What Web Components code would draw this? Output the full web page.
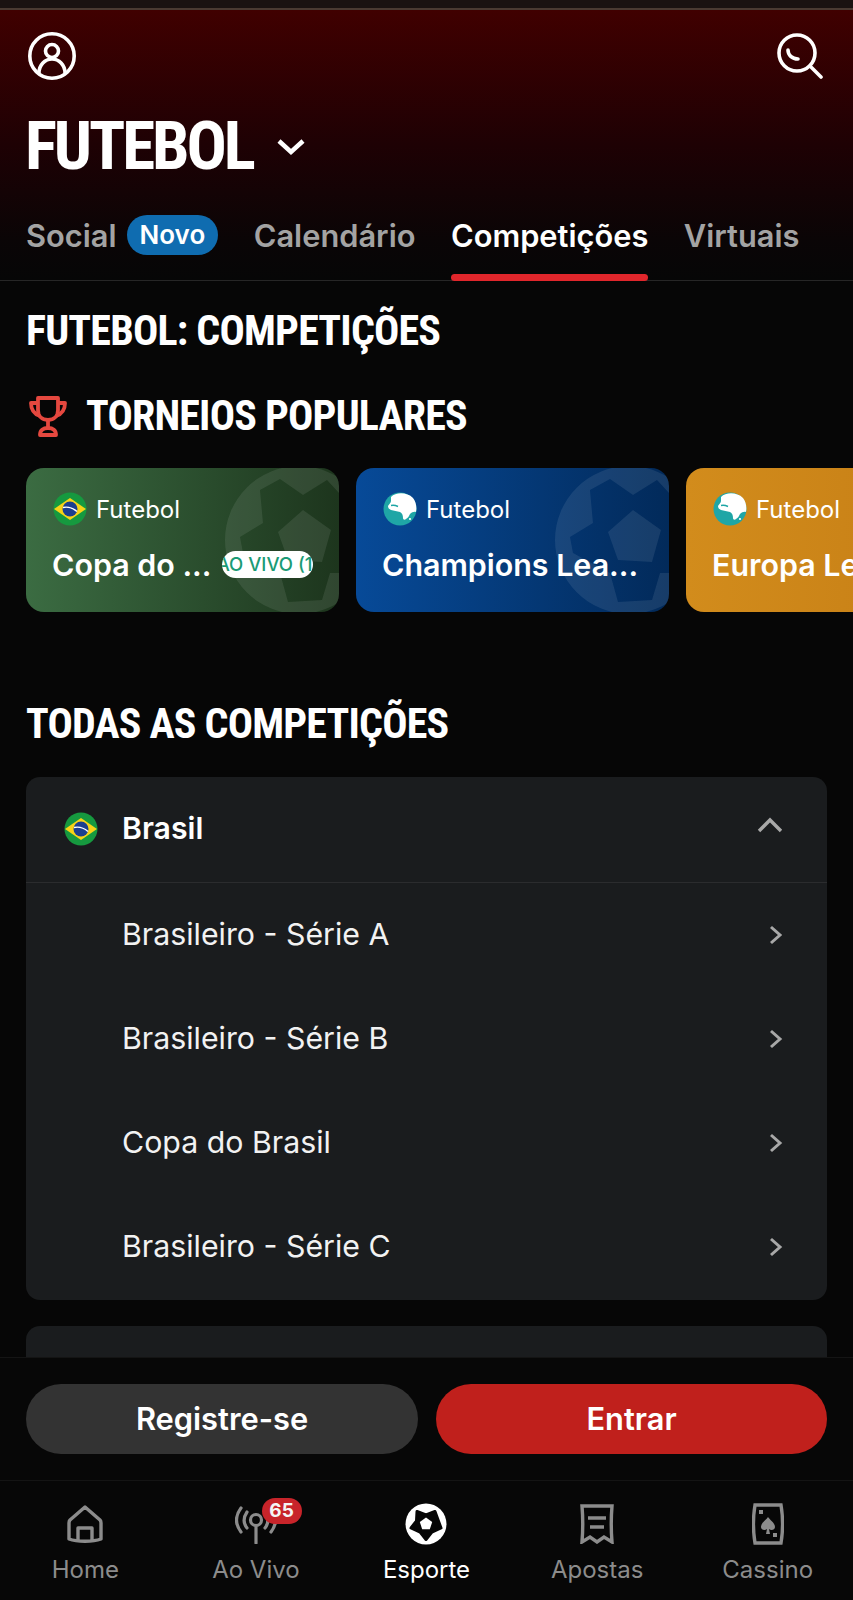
<!DOCTYPE html>
<html lang="pt">
<head>
<meta charset="utf-8">
<title>Futebol</title>
<style>
    html, body { margin: 0; background: #060606; }
    body { font-family: Inter, "Liberation Sans", sans-serif; color: #fff; }
    .cards { display: flex; gap: 17px; }
</style>
</head>
<body>
<sport-app>
    <sport-header slot="header" title="FUTEBOL"></sport-header>
    <section-title>FUTEBOL: COMPETIÇÕES</section-title>
    <section-title trophy>TORNEIOS POPULARES</section-title>
    <div class="cards" slot="cards">
        <tourney-card theme="green" flag="br" name="Copa do ..." live="AO VIVO (1)"></tourney-card>
        <tourney-card theme="blue" flag="world" name="Champions Lea..."></tourney-card>
        <tourney-card theme="orange" flag="world" name="Europa League"></tourney-card>
    </div>
    <section-title slot="all">TODAS AS COMPETIÇÕES</section-title>
    <comp-group slot="all" name="Brasil">
        <comp-row>Brasileiro - Série A</comp-row>
        <comp-row>Brasileiro - Série B</comp-row>
        <comp-row>Copa do Brasil</comp-row>
        <comp-row>Brasileiro - Série C</comp-row>
    </comp-group>
    <comp-group slot="all"></comp-group>
    <action-bar slot="footer"></action-bar>
    <nav-bar slot="footer"></nav-bar>
</sport-app>

<script>
const FLAGS = {
    br: `<svg viewBox="0 0 34 34" width="34" height="34">
        <circle cx="17" cy="17" r="16.5" fill="#16993f"/>
        <path d="M1 17 17 6l16 11-16 11z" fill="#f7d417"/>
        <circle cx="17" cy="17" r="7.5" fill="#1c3f8f"/>
        <path d="M10 15.5c5-1 10 .5 14 4" fill="none" stroke="#fff" stroke-width="1.4"/>
    </svg>`,
    world: `<svg viewBox="0 0 34 34" width="34" height="34">
        <circle cx="17" cy="17" r="16.5" fill="#1fa6a6"/>
        <path d="M8 5C13 0 24 0 30 6c3 4 4 9 3 14-2-.5-4 0-6 2-1 2-2 4-4 5-1 1-3 1-3-1 0-3-1-5-3-6-3-1-6-1-9-2-2-1-3-2-3-4 1-2 3-3 3-5 0-2 0-3 0-4z" fill="#fff"/>
        <path d="M8 13.500c2-.5 5 0 7 1" fill="none" stroke="#1fa6a6" stroke-width="1.400"/>
        <circle cx="27" cy="27" r="1.100" fill="#fff"/>
    </svg>`
};

class SportApp extends HTMLElement {
    constructor() {
        super();
        this.shadow = this.attachShadow({mode: 'open'});
    }
    connectedCallback() {
        this.shadow.innerHTML = `
        <style>
            :host { display: flex; flex-direction: column; width: 853px; height: 1600px; overflow: hidden; background: #060606; }
            .main { flex: 1; min-height: 0; overflow: hidden; display: flex; flex-direction: column; }
            .titles { display: flex; flex-direction: column; padding: 26px 26px 0; gap: 37px; }
            .cards { padding: 28px 0 0 26px; }
            .all { padding: 88px 26px 0; display: flex; flex-direction: column; gap: 29px; }
            ::slotted(comp-group:last-of-type) { margin-top: -3px; }
        </style>
        <slot name="header"></slot>
        <div class="main">
            <div class="titles"><slot></slot></div>
            <div class="cards"><slot name="cards"></slot></div>
            <div class="all"><slot name="all"></slot></div>
        </div>
        <slot name="footer"></slot>
        `;
    }
}

class SportHeader extends HTMLElement {
    constructor() {
        super();
        this.shadow = this.attachShadow({mode: 'open'});
    }
    connectedCallback() {
        this.shadow.innerHTML = `
        <style>
            :host { display: block; flex: none; }
            .strip { height: 8px; background: #1a1211; border-bottom: 2px solid #4a3a32; }
            .hero { height: 271px; box-sizing: border-box; padding: 22px 26px 0; background: linear-gradient(#400000 0, #1e0104 50%, #0a0506 85%, #060606 100%); border-bottom: 1px solid #262626; display: flex; flex-direction: column; }
            .icons { display: flex; justify-content: space-between; align-items: center; height: 48px; padding: 0 4px 0 2px; }
            .sport { display: flex; align-items: center; gap: 24px; margin-top: 36px; height: 60px; }
            h1 { margin: 0 0 0 -1px; font-family: "Roboto Condensed", "Liberation Sans Narrow", Roboto, sans-serif; font-stretch: condensed; font-weight: 700; font-size: 67px; letter-spacing: -3.100px; line-height: 60px; }
            .tabs { display: flex; align-items: center; margin-top: 29px; height: 60px; gap: 35.500px; font-weight: 600; font-size: 30.800px; color: #a3a3a3; }
            .tab { display: flex; align-items: center; height: 60px; position: relative; gap: 10px; }
            .tab.on { color: #fff; }
            .tab.on::after { content: ""; position: absolute; left: 0; right: 0; bottom: -16px; height: 7px; border-radius: 4px; background: #e0262b; }
            .new { background: #0f6cb0; color: #fff; border-radius: 20px; height: 40px; line-height: 40px; padding: 0 13px; font-size: 26px; }
        </style>
        <div class="strip"></div>
        <div class="hero">
            <div class="icons">
                <svg viewBox="0 0 48 48" width="48" height="48" fill="none" stroke="#fff" stroke-width="3.600">
                    <circle cx="24" cy="24" r="22.200"/>
                    <circle cx="24" cy="19" r="6.500"/>
                    <path d="M11 41c0-8 6-14 13-14s13 6 13 14"/>
                </svg>
                <svg viewBox="0 0 46 46" width="46" height="46" fill="none" stroke="#fff" stroke-width="3.600" stroke-linecap="round">
                    <circle cx="20" cy="20" r="18"/>
                    <path d="M33 33 44 44"/>
                    <path d="M11 17c0 5 4 9 10 9"/>
                </svg>
            </div>
            <div class="sport">
                <h1>${this.getAttribute('title')}</h1>
                <svg viewBox="0 0 28 20" width="28" height="20" fill="none" stroke="#fff" stroke-width="4.500"><path d="M2 5l12 11L26 5"/></svg>
            </div>
            <div class="tabs">
                <div class="tab">Social <span class="new">Novo</span></div>
                <div class="tab">Calendário</div>
                <div class="tab on">Competições</div>
                <div class="tab">Virtuais</div>
            </div>
        </div>
        `;
    }
}

class SectionTitle extends HTMLElement {
    constructor() {
        super();
        this.shadow = this.attachShadow({mode: 'open'});
    }
    connectedCallback() {
        let trophy = this.hasAttribute('trophy') ? `
            <svg viewBox="0 0 38 42" width="38" height="42" fill="none" stroke="#e5483f" stroke-width="3.800" stroke-linejoin="round" style="margin-left:3px">
                <path d="M9 3h20v12c0 6-4 10-10 10S9 21 9 15z"/>
                <path d="M9 8H2c0 7 3 11 9 13M29 8h7c0 7-3 11-9 13"/>
                <path d="M19 25v8"/>
                <path d="M11 40c0-5 3-7 8-7s8 2 8 7z"/>
            </svg>` : '';
        this.shadow.innerHTML = `
        <style>
            :host { display: flex; align-items: center; gap: 19px; font-family: "Roboto Condensed", "Liberation Sans Narrow", Roboto, sans-serif; font-stretch: condensed; font-weight: 700; font-size: 42px; letter-spacing: -.8px; line-height: 48px; color: #fff; }
        </style>
        ${trophy}<span><slot></slot></span>
        `;
    }
}

class TourneyCard extends HTMLElement {
    constructor() {
        super();
        this.shadow = this.attachShadow({mode: 'open'});
    }
    connectedCallback() {
        let live = this.getAttribute('live');
        this.shadow.innerHTML = `
        <style>
            :host { display: block; flex: none; width: 313px; height: 144px; border-radius: 18px; overflow: hidden; position: relative; box-sizing: border-box; padding: 24px 26px 0; }
            :host([theme=green]) { background: linear-gradient(90deg, #3b6c42, #1d351d); }
            :host([theme=blue]) { background: linear-gradient(90deg, #074a98, #022a5a); }
            :host([theme=orange]) { background: linear-gradient(90deg, #d28c1c, #c47c14); }
            .ball { position: absolute; left: 0; top: 0; }
            .top { display: flex; align-items: center; gap: 9px; font-size: 24px; height: 34px; position: relative; padding-left: 1px; }
            .bottom { display: flex; align-items: center; gap: 11px; margin-top: 21px; height: 36px; font-size: 30.400px; font-weight: 600; position: relative; white-space: nowrap; }
            .live { flex: none; width: 91px; height: 27px; line-height: 27px; border-radius: 14px; background: #fff; color: #1a9b75; font-size: 18.500px; font-weight: 500; overflow: hidden; display: flex; justify-content: center; margin-top: -2px; }
        </style>
        <svg class="ball" viewBox="0 0 313 144" width="313" height="144">
            <path fill="#fff" fill-opacity=".085" fill-rule="evenodd" d="M199 72a74 74 0 1 0 148 0a74 74 0 1 0 -148 0z
                M234 22 254 11 277 27 301 12 313 25V105H304L296 132 262 134 254 105 217 85 214 69 237 55z
                M277 42 305 62 296 94 262 92 252 64z"/>
        </svg>
        <div class="top">${FLAGS[this.getAttribute('flag')]}<span>Futebol</span></div>
        <div class="bottom"><span>${this.getAttribute('name')}</span>${live ? `<span class="live"><span>${live}</span></span>` : ''}</div>
        `;
    }
}

class CompGroup extends HTMLElement {
    constructor() {
        super();
        this.shadow = this.attachShadow({mode: 'open'});
    }
    connectedCallback() {
        let name = this.getAttribute('name');
        let head = name ? `
        <div class="head">
            <span class="flag">${FLAGS.br}</span>
            <span class="name">${name}</span>
            <svg viewBox="0 0 26 16" width="26" height="16" fill="none" stroke="#a8a8a8" stroke-width="3.400" style="margin-bottom:8px"><path d="M2 14 13 3l11 11"/></svg>
        </div>` : '<div class="empty"></div>';
        this.shadow.innerHTML = `
        <style>
            :host { display: block; flex: none; background: #1a1c1e; border-radius: 14px; overflow: hidden; }
            .head { display: flex; align-items: center; height: 105.500px; box-sizing: border-box; border-bottom: 1px solid #2b2c2e; padding: 0 44px 0 38px; font-size: 30.200px; font-weight: 600; }
            .flag { width: 58px; display: flex; }
            .name { flex: 1; margin-bottom: 3px; }
            .empty { height: 80px; }
            .rows { display: block; padding-bottom: 1px; }
        </style>
        ${head}<div class="rows"><slot></slot></div>
        `;
    }
}

class CompRow extends HTMLElement {
    constructor() {
        super();
        this.shadow = this.attachShadow({mode: 'open'});
    }
    connectedCallback() {
        this.shadow.innerHTML = `
        <style>
            :host { display: flex; align-items: center; justify-content: space-between; height: 104.200px; padding: 0 44px 0 96px; font-size: 30.300px; color: #f2f2f2; }
            span { margin-bottom: 2px; }
        </style>
        <span><slot></slot></span>
        <svg viewBox="0 0 14 20" width="14" height="20" fill="none" stroke="#a8a8a8" stroke-width="3"><path d="M2 2l9 8-9 8"/></svg>
        `;
    }
}

class ActionBar extends HTMLElement {
    constructor() {
        super();
        this.shadow = this.attachShadow({mode: 'open'});
    }
    connectedCallback() {
        this.shadow.innerHTML = `
        <style>
            :host { display: grid; grid-template-columns: 392px 391px; gap: 18px; flex: none; height: 123px; box-sizing: border-box; padding: 26px 26px 0; background: #070707; border-top: 1px solid #141414; }
            .btn { height: 70px; line-height: 70px; border-radius: 35px; text-align: center; font-size: 30.800px; font-weight: 600; }
            .grey { background: #333; }
            .red { background: #c0201c; }
        </style>
        <div class="btn grey">Registre-se</div>
        <div class="btn red">Entrar</div>
        `;
    }
}

class NavBar extends HTMLElement {
    constructor() {
        super();
        this.shadow = this.attachShadow({mode: 'open'});
    }
    connectedCallback() {
        this.shadow.innerHTML = `
        <style>
            :host { display: grid; grid-template-columns: repeat(5, 1fr); flex: none; height: 120px; box-sizing: border-box; background: #070707; border-top: 1px solid #141414; padding-top: 22px; }
            .item { display: flex; flex-direction: column; align-items: center; color: #8c8c8c; font-size: 24px; position: relative; }
            .item.on { color: #fff; }
            .icon { height: 42px; display: flex; align-items: center; justify-content: center; }
            .label { margin-top: 9px; line-height: 32px; }
            .badge { position: absolute; left: 91px; top: -5px; width: 40px; height: 26px; line-height: 26px; text-align: center; border-radius: 13px; background: #c8242a; color: #f4f4f4; font-size: 19px; font-weight: 700; }
            svg { display: block; }
        </style>
        <div class="item">
            <div class="icon"><svg viewBox="0 0 36 38" width="36" height="38" fill="none" stroke="#8c8c8c" stroke-width="3.400" stroke-linejoin="round"><path d="M18 2 3 15c-1 1-1 2-1 3v16c8 3 24 3 32 0V18c0-1 0-2-1-3z"/><path d="M11 35V23h14v12"/></svg></div>
            <div class="label">Home</div>
        </div>
        <div class="item">
            <div class="icon"><svg viewBox="0 0 42 40" width="42" height="40" fill="none" stroke="#8c8c8c" stroke-width="3.200" stroke-linecap="round"><circle cx="21" cy="16" r="5.500"/><path d="M21 22v17"/><path d="M6 4C0 12 0 20 6 28M12 8c-4 6-4 11 0 16M36 4c6 8 6 16 0 24M30 8c4 6 4 11 0 16"/></svg></div>
            <div class="badge">65</div>
            <div class="label">Ao Vivo</div>
        </div>
        <div class="item on">
            <div class="icon"><svg viewBox="0 0 42 42" width="42" height="42"><circle cx="21" cy="21" r="20.500" fill="#fff"/><path fill="#060606" stroke="#060606" stroke-width="3" stroke-linejoin="round" d="M12 8.500 21 12 30 8.500 36 25 26.900 29.100 21 36.500 15.100 29.100 6 25 11.500 17.900z"/><path fill="#fff" d="M21 14.500 27.200 19 24.800 26.300H17.200L14.800 19z"/></svg></div>
            <div class="label">Esporte</div>
        </div>
        <div class="item">
            <div class="icon"><svg viewBox="0 0 36 40" width="36" height="40" fill="none" stroke="#8c8c8c" stroke-width="3.400"><path d="M3 2h30c-1 12-1 24 0 36l-8-5-7 5-7-5-8 5C4 26 4 14 3 2z"/><path d="M9 14h18M11 23h14"/></svg></div>
            <div class="label">Apostas</div>
        </div>
        <div class="item">
            <div class="icon"><svg viewBox="0 0 32 42" width="32" height="42"><path d="M3 2h26c2 12 2 26 0 38H3C1 28 1 14 3 2z" fill="none" stroke="#8c8c8c" stroke-width="3.400"/><path fill="#8c8c8c" d="M16 14c2 3 7 6 7 10 0 3-4 4-6 2l1 5h-4l1-5c-2 2-6 1-6-2 0-4 5-7 7-10zM7 7h4v4H7zM21 30h4v4h-4z"/></svg></div>
            <div class="label">Cassino</div>
        </div>
        `;
    }
}

customElements.define('sport-app', SportApp);
customElements.define('sport-header', SportHeader);
customElements.define('section-title', SectionTitle);
customElements.define('tourney-card', TourneyCard);
customElements.define('comp-group', CompGroup);
customElements.define('comp-row', CompRow);
customElements.define('action-bar', ActionBar);
customElements.define('nav-bar', NavBar);
</script>
</body>
</html>
